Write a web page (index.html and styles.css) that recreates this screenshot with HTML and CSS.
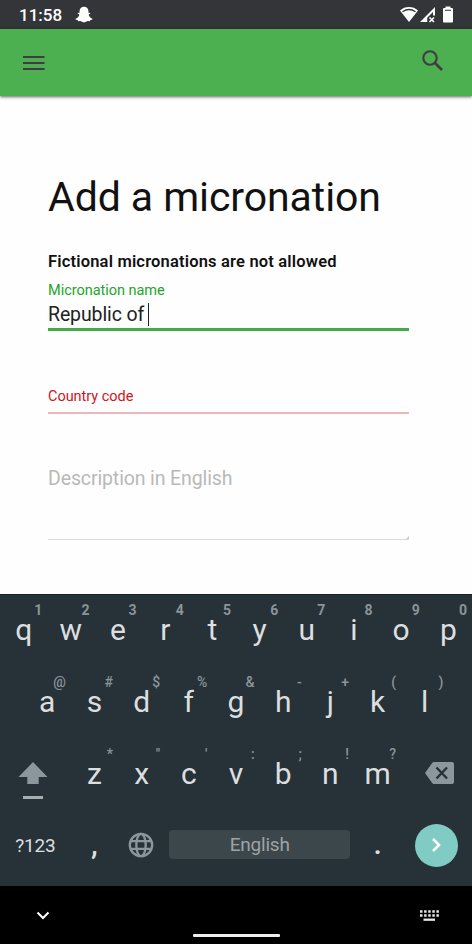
FILE: index.html
```html
<!DOCTYPE html>
<html lang="en">
<head>
<meta charset="utf-8">
<title>Add a micronation</title>
<link rel="stylesheet" href="styles.css">
</head>
<body>
<div class="status">
  <span class="time">11:58</span>
  <svg class="ghost" width="18" height="18" viewBox="0 0 18 18"><path fill="#fff" d="M9 .8c2.700 0 4.500 1.900 4.500 4.500v1.700l1.300-.2c.8.2.6.9-.1 1.200-1.100.5-1.200.8-.7 1.700.8 1.500 1.700 2.400 3.200 2.900.5.300.2.900-.4 1.100l-1.600.5-.4 1-1.900-.1c-1.300.1-2 1.300-3.900 1.300s-2.600-1.200-3.900-1.300l-1.900.1-.4-1-1.600-.5c-.6-.2-.9-.8-.4-1.100 1.500-.5 2.400-1.400 3.200-2.900.5-.9.400-1.200-.7-1.700-.7-.3-.9-1-.1-1.200l1.300.2V5.300C4.500 2.700 6.300.8 9 .8z"/></svg>
  <svg class="signals" width="54" height="18" viewBox="0 0 54 18"><path fill="#fff" d="M0 4.500C5-.1 13-.1 18 4.500L9 16z"/><path d="M2.500 5.800c4-2.800 9-2.800 13 0" stroke="#343539" stroke-width="1.300" fill="none"/><path fill="#fff" d="M20 16 35 1v8.500h-2V6l-5.800 5.800V16z"/><path d="m29.500 11.500 4.500 4.500m0-4.500-4.500 4.500" stroke="#fff" stroke-width="1.600"/><path fill="#fff" d="M45.500.5h5V2H52q1 0 1 1v12.500q0 1-1 1h-8q-1 0-1-1V3q0-1 1-1h1.500z"/><path d="M45 4.300h6" stroke="#343539" stroke-width="1"/></svg>
</div>
<header class="appbar">
  <svg width="22" height="16" viewBox="0 0 22 16"><path d="M0 2h21.500M0 8h21.500M0 14h21.500" stroke="#423b43" stroke-width="2"/></svg>
  <svg class="search" width="22" height="22" viewBox="0 0 22 22"><circle cx="8" cy="8" r="6.700" fill="none" stroke="#423b43" stroke-width="2.100"/><path d="m13 13 7 7" stroke="#423b43" stroke-width="2.700"/></svg>
</header>
<main class="page">
  <h1>Add a micronation</h1>
  <p class="notice">Fictional micronations are not allowed</p>
  <div class="field name"><label>Micronation name</label><div class="value"><span>Republic of</span><i class="caret"></i></div></div>
  <div class="field code"><label>Country code</label></div>
  <div class="field desc"><span>Description in English</span><svg width="4" height="4" viewBox="0 0 4 4"><path d="M1 4 4 1v3z" fill="#ccc"/></svg></div>
</main>
<section class="keyboard">
  <div class="row">
    <div class="key"><sup>1</sup>q</div><div class="key"><sup>2</sup>w</div><div class="key"><sup>3</sup>e</div><div class="key"><sup>4</sup>r</div><div class="key"><sup>5</sup>t</div><div class="key"><sup>6</sup>y</div><div class="key"><sup>7</sup>u</div><div class="key"><sup>8</sup>i</div><div class="key"><sup>9</sup>o</div><div class="key"><sup>0</sup>p</div>
  </div>
  <div class="row symbols">
    <div class="key"><sup>@</sup>a</div><div class="key"><sup>#</sup>s</div><div class="key"><sup>$</sup>d</div><div class="key"><sup>%</sup>f</div><div class="key"><sup>&amp;</sup>g</div><div class="key"><sup>-</sup>h</div><div class="key"><sup>+</sup>j</div><div class="key"><sup>(</sup>k</div><div class="key"><sup>)</sup>l</div>
  </div>
  <div class="row symbols">
    <div class="side shift"><svg width="30" height="38" viewBox="0 0 30 38"><path fill="#8b979c" d="M15 0 29.500 15H20.700v7H9.300v-7H.5z"/><path fill="#a7aeb1" d="M5 34h20v3H5z"/></svg></div>
    <div class="key"><sup>*</sup>z</div><div class="key"><sup>"</sup>x</div><div class="key"><sup>'</sup>c</div><div class="key"><sup>:</sup>v</div><div class="key"><sup>;</sup>b</div><div class="key"><sup>!</sup>n</div><div class="key"><sup>?</sup>m</div>
    <div class="side erase"><svg width="29" height="22" viewBox="0 0 29 22"><path fill="#8b979c" d="M9 0h18q2 0 2 2v18q0 2-2 2H9q-1.200 0-2-1.200L0 11l7-9.800Q7.800 0 9 0z"/><path d="m11.500 5.500 10.500 11m0-11-10.500 11" stroke="#263238" stroke-width="2.400"/></svg></div>
  </div>
  <div class="row bottom">
    <div class="mode">?123</div>
    <div class="key comma">,</div>
    <div class="globe"><svg width="26" height="26" viewBox="0 0 26 26" fill="none" stroke="#8b979c" stroke-width="2.300"><circle cx="13" cy="13" r="11.200"/><ellipse cx="13" cy="13" rx="4.700" ry="11.200"/><path d="M2.500 9.200h21M2.500 16.800h21"/></svg></div>
    <div class="space">English</div>
    <div class="key period">.</div>
    <div class="enter"><svg width="12" height="16" viewBox="0 0 12 16"><path d="m2 2 6 6-6 6" fill="none" stroke="#fff" stroke-width="2.600"/></svg></div>
  </div>
</section>
<footer class="nav">
  <svg class="down" width="14" height="10" viewBox="0 0 14 10"><path d="m1.500 1.500 5.500 5.500 5.500-5.500" fill="none" stroke="#fff" stroke-width="2"/></svg>
  <div class="handle"></div>
  <svg class="kb" width="20" height="12" viewBox="0 0 20 12" fill="none" stroke="#e8e8e8"><path d="M0 1.500h19M0 5.500h19" stroke-width="2.500" stroke-dasharray="2.500 1.600"/><path d="M3.500 9.700h11.500" stroke-width="2.300"/></svg>
</footer>
</body>
</html>
```

FILE: styles.css
```css
* { box-sizing: border-box; }
body { margin: 0; width: 472px; height: 944px; display: flex; flex-direction: column; overflow: hidden; background: #fefefe; font-family: Roboto, "Liberation Sans", sans-serif; }
svg { display: block; flex: none; }

.status { height: 29px; flex: none; display: flex; align-items: center; padding: 1px 18px 0 19px; background: #343539; color: #fff; }
.time { width: 56px; font-size: 17px; line-height: 20px; font-weight: 500; white-space: nowrap; }
.signals { margin-left: auto; }

.appbar { height: 67px; flex: none; display: flex; align-items: center; justify-content: space-between; padding: 1px 28px 0 23px; background: #4caf50; box-shadow: 0 1px 3px rgba(0, 0, 0, .6); }
.search { margin-top: -5px; }

.page { height: 498px; flex: none; padding: 76px 63px 0 48px; }
h1 { margin: 0; font-size: 41px; line-height: 50px; font-weight: 400; color: #111; letter-spacing: -.08px; white-space: nowrap; }
.notice { margin: 30px 0 0; font-size: 16.500px; line-height: 20px; font-weight: 600; color: #111; letter-spacing: .18px; white-space: nowrap; }
.field { width: 361px; white-space: nowrap; }
.field label { display: block; font-size: 14.500px; line-height: 18px; letter-spacing: -.03px; }
.name { height: 59px; padding-top: 10px; border-bottom: 3px solid #43ac48; }
.name label { color: #22a52a; }
.value { display: flex; align-items: center; height: 29px; font-size: 19.500px; line-height: 29px; color: #222; letter-spacing: -.12px; }
.caret { width: 1px; height: 23px; margin-left: 4px; background: #222; }
.code { height: 83px; padding-top: 57px; border-bottom: 2px solid #ecb7ba; }
.code label { color: #d0141c; }
.desc { height: 126px; padding-top: 51px; border-bottom: 1px solid #dadada; font-size: 19.500px; line-height: 28px; color: #b9b9b9; letter-spacing: -.12px; display: flex; justify-content: space-between; align-items: flex-start; }
.desc svg { align-self: flex-end; }

.keyboard { height: 292px; flex: none; background: #263238; color: #dcdedf; border-top: 1px solid #122329; }
.row { height: 72px; display: flex; justify-content: center; }
.key { position: relative; width: 47.200px; height: 72px; text-align: center; font-size: 30px; line-height: 70px; }
.key sup { position: absolute; top: 7px; right: 5px; font-size: 14px; line-height: 16px; font-weight: 700; color: #8b9499; }
.symbols sup { font-weight: 500; }
.side { width: 70.800px; display: flex; }
.shift { padding: 23px 0 0 18px; }
.erase { padding: 23px 0 0 24px; }
.bottom { height: 68px; justify-content: flex-start; align-items: center; }
.mode { width: 70.800px; padding-top: 1px; text-align: center; font-size: 19px; line-height: 24px; letter-spacing: -.2px; }
.comma { font-weight: 500; }
.globe { width: 47.200px; padding-right: 1px; display: flex; justify-content: center; }
.space { width: 181px; height: 29px; margin: 0 0 2px 4px; border-radius: 4px; background: #3c474c; color: #9da3a6; text-align: center; font-size: 19px; line-height: 29px; letter-spacing: -.2px; }
.period { margin-left: 4px; font-weight: 500; }
.enter { width: 43px; height: 43px; margin-left: 14px; border-radius: 50%; background: #80cbc4; display: flex; align-items: center; justify-content: center; }

.nav { height: 58px; flex: none; display: flex; justify-content: space-between; background: #000; padding: 24px 32px 0 36px; }
.down { margin-top: 1px; }
.handle { width: 87px; height: 3px; margin: 24px 0 0 2px; border-radius: 1px; background: #eee; }
```
